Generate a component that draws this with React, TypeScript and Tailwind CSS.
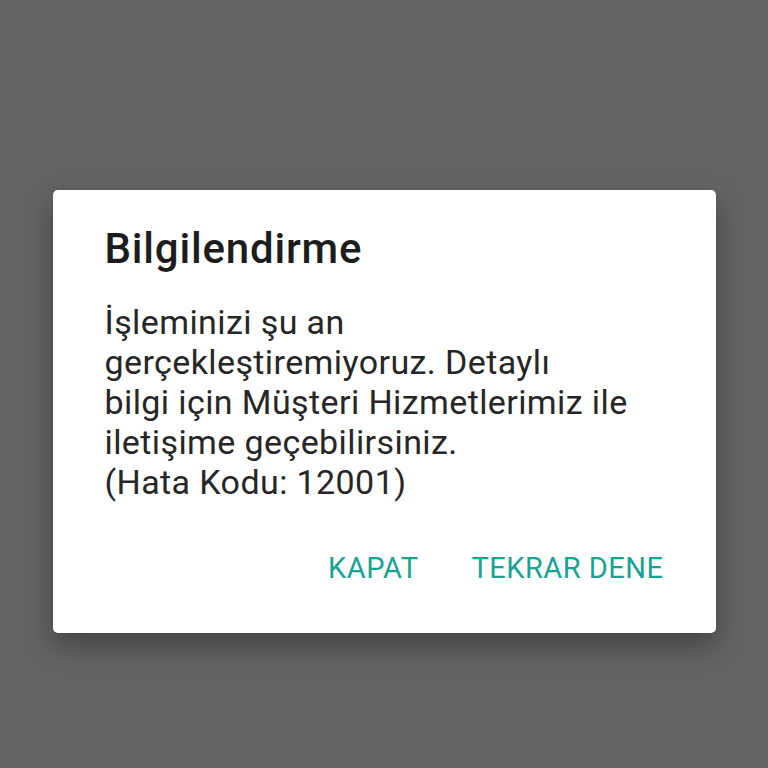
export default function App() {
  return (
    <div
      className="flex h-[768px] w-[768px] items-start justify-center bg-[#646464] pt-[190px]"
      style={{ fontFamily: 'Roboto, "Noto Sans", sans-serif' }}
    >
      <div className="w-[663px] rounded-[5px] bg-white px-[52px] pb-[41px] pt-[35px] shadow-[0_12px_30px_rgba(0,0,0,0.35)]">
        <h1 className="text-[42px] font-medium leading-[48px] tracking-[0.8px] text-[#1c1c1c]">Bilgilendirme</h1>

        <p className="mt-[29px] whitespace-nowrap text-[34px] leading-[40px] tracking-[0.4px] text-[#262626]">
          İşleminizi şu an
          <br />
          gerçekleştiremiyoruz. Detaylı
          <br />
          bilgi için Müşteri Hizmetlerimiz ile
          <br />
          iletişime geçebilirsiniz.
          <br />
          (Hata Kodu: 12001)
        </p>

        <div className="mt-[42px] flex h-[48px] items-center justify-end gap-[53px] text-[29px] tracking-[0.5px] text-[#17a393]">
          <button className="leading-[29px]">KAPAT</button>
          <button className="leading-[29px]">TEKRAR DENE</button>
        </div>
      </div>
    </div>
  );
}
